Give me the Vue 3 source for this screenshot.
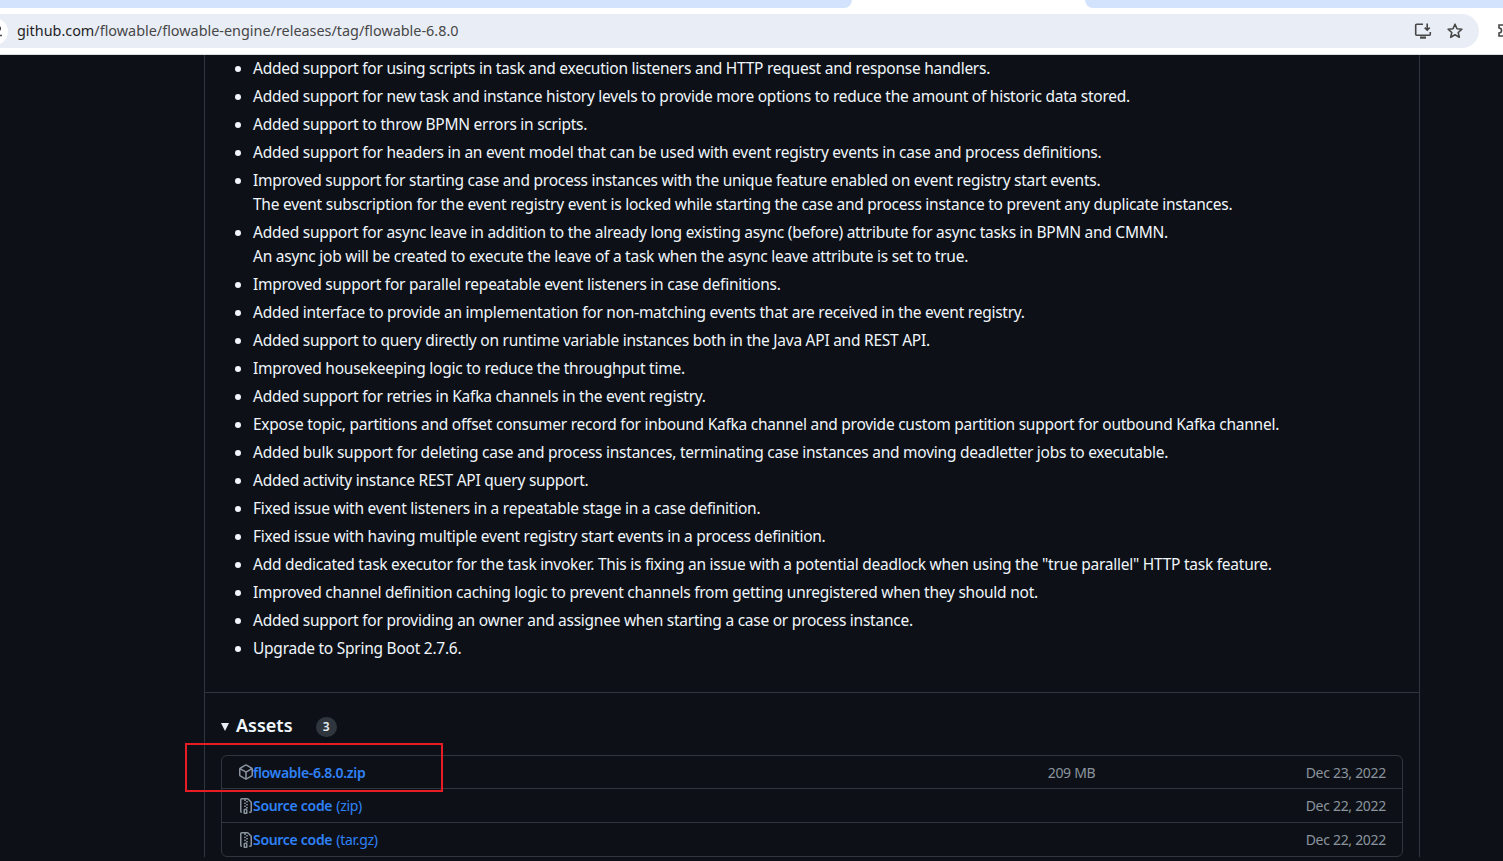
<script setup>
const notes = [
  ['Added support for using scripts in task and execution listeners and HTTP request and response handlers.'],
  ['Added support for new task and instance history levels to provide more options to reduce the amount of historic data stored.'],
  ['Added support to throw BPMN errors in scripts.'],
  ['Added support for headers in an event model that can be used with event registry events in case and process definitions.'],
  ['Improved support for starting case and process instances with the unique feature enabled on event registry start events.', 'The event subscription for the event registry event is locked while starting the case and process instance to prevent any duplicate instances.'],
  ['Added support for async leave in addition to the already long existing async (before) attribute for async tasks in BPMN and CMMN.', 'An async job will be created to execute the leave of a task when the async leave attribute is set to true.'],
  ['Improved support for parallel repeatable event listeners in case definitions.'],
  ['Added interface to provide an implementation for non-matching events that are received in the event registry.'],
  ['Added support to query directly on runtime variable instances both in the Java API and REST API.'],
  ['Improved housekeeping logic to reduce the throughput time.'],
  ['Added support for retries in Kafka channels in the event registry.'],
  ['Expose topic, partitions and offset consumer record for inbound Kafka channel and provide custom partition support for outbound Kafka channel.'],
  ['Added bulk support for deleting case and process instances, terminating case instances and moving deadletter jobs to executable.'],
  ['Added activity instance REST API query support.'],
  ['Fixed issue with event listeners in a repeatable stage in a case definition.'],
  ['Fixed issue with having multiple event registry start events in a process definition.'],
  ['Add dedicated task executor for the task invoker. This is fixing an issue with a potential deadlock when using the "true parallel" HTTP task feature.'],
  ['Improved channel definition caching logic to prevent channels from getting unregistered when they should not.'],
  ['Added support for providing an owner and assignee when starting a case or process instance.'],
  ['Upgrade to Spring Boot 2.7.6.'],
]
const assets = [
  { icon: 'box', name: 'flowable-6.8.0.zip', size: '209 MB', date: 'Dec 23, 2022' },
  { icon: 'zip', name: 'Source code', ext: '(zip)', size: '', date: 'Dec 22, 2022' },
  { icon: 'zip', name: 'Source code', ext: '(tar.gz)', size: '', date: 'Dec 22, 2022' },
]
</script>

<template>
  <div class="screen">
    <header class="chrome">
      <div class="tabs">
        <div class="tab-bg left"></div>
        <div class="tab-active"></div>
        <div class="tab-bg right"></div>
      </div>
      <div class="toolbar">
        <div class="site-chip">
          <svg width="16" height="16" viewBox="0 0 16 16" fill="none" stroke="#474747" stroke-width="1.6">
            <path d="M1 4.5h9M9 11.5h6" />
            <circle cx="11.5" cy="4.5" r="1.8" />
            <circle cx="6.5" cy="11.5" r="1.8" />
          </svg>
        </div>
        <div class="omnibox">
          <span class="url"><span class="host">github.com</span>/flowable/flowable-engine/releases/tag/flowable-6.8.0</span>
          <svg class="tool-icon install" width="18" height="18" viewBox="0 0 18 18" fill="none" stroke="#474747" stroke-width="1.6">
            <path d="M9 2.2H2.6a.9.9 0 0 0-.9.9v9.2a.9.9 0 0 0 .9.9h12.8a.9.9 0 0 0 .9-.9V10" />
            <path d="M13.2 1.5v6.4M10.7 5.6l2.5 2.5 2.5-2.5" />
            <path d="M6 15.6h6" stroke-width="2.2" />
          </svg>
          <svg class="tool-icon" width="18" height="18" viewBox="0 0 18 18" fill="none" stroke="#474747" stroke-width="1.6" stroke-linejoin="round">
            <path d="M9 2.2l2 4.5 4.9.5-3.7 3.3 1.1 4.8L9 12.8l-4.3 2.5 1.1-4.8-3.7-3.3 4.9-.5z" />
          </svg>
        </div>
        <svg class="ext" width="18" height="18" viewBox="0 0 18 18" fill="none" stroke="#474747" stroke-width="1.6">
          <path d="M2 3h10v11H2v-3a2 2 0 0 0 0-5z" />
        </svg>
      </div>
    </header>

    <main class="page">
      <section class="release">
        <ul class="notes">
          <li v-for="(note, i) in notes" :key="i">
            <template v-for="(line, j) in note" :key="j"><br v-if="j" />{{ line }}</template>
          </li>
        </ul>
        <div class="assets">
          <div class="assets-head">
            <span class="caret"></span>
            <h2>Assets</h2>
            <span class="counter">3</span>
          </div>
          <div class="asset-box">
            <div v-for="(a, i) in assets" :key="i" class="asset-row">
              <div class="asset-name">
                <svg v-if="a.icon === 'box'" width="16" height="16" viewBox="0 0 16 16" fill="#8b949e">
                  <path d="m8.878.392 5.25 3.045c.54.314.872.89.872 1.514v6.098a1.75 1.75 0 0 1-.872 1.514l-5.25 3.045a1.75 1.75 0 0 1-1.756 0l-5.25-3.045A1.75 1.75 0 0 1 1 11.049V4.951c0-.624.332-1.201.872-1.514L7.122.392a1.75 1.75 0 0 1 1.756 0ZM7.875 1.69l-4.63 2.685L8 7.133l4.755-2.758-4.63-2.685a.248.248 0 0 0-.25 0ZM2.5 5.677v5.372c0 .09.047.171.125.216l4.625 2.683V8.432Zm6.25 8.271 4.625-2.683a.25.25 0 0 0 .125-.216V5.677L8.75 8.432Z" />
                </svg>
                <svg v-else width="16" height="16" viewBox="0 0 16 16" fill="#8b949e">
                  <path d="M3.5 1.75v11.5c0 .09.048.173.126.217a.75.75 0 0 1-.752 1.298A1.748 1.748 0 0 1 2 13.25V1.75C2 .784 2.784 0 3.75 0h5.586c.464 0 .909.185 1.237.513l2.914 2.914c.329.328.513.773.513 1.237v8.586A1.75 1.75 0 0 1 12.25 15h-.5a.75.75 0 0 1 0-1.5h.5a.25.25 0 0 0 .25-.25V4.664a.25.25 0 0 0-.073-.177L9.513 1.573a.25.25 0 0 0-.177-.073H7.25a.75.75 0 0 1 0 1.5h-.5a.75.75 0 0 1 0-1.5h-3a.25.25 0 0 0-.25.25Zm3.75 8.75h.5c.966 0 1.75.784 1.75 1.75v3a.75.75 0 0 1-.75.75h-2.5a.75.75 0 0 1-.75-.75v-3c0-.966.784-1.75 1.75-1.75ZM6 5.25a.75.75 0 0 1 .75-.75h.5a.75.75 0 0 1 0 1.5h-.5A.75.75 0 0 1 6 5.25Zm.75 2.25h.5a.75.75 0 0 1 0 1.5h-.5a.75.75 0 0 1 0-1.5ZM8 6.75A.75.75 0 0 1 8.75 6h.5a.75.75 0 0 1 0 1.5h-.5A.75.75 0 0 1 8 6.75ZM8.75 3h.5a.75.75 0 0 1 0 1.5h-.5a.75.75 0 0 1 0-1.5ZM8 9.75A.75.75 0 0 1 8.75 9h.5a.75.75 0 0 1 0 1.5h-.5A.75.75 0 0 1 8 9.75Zm-1 2.5v2.25h1v-2.25a.25.25 0 0 0-.25-.25h-.5a.25.25 0 0 0-.25.25Z" />
                </svg>
                <span class="link"><b>{{ a.name }}</b><span v-if="a.ext" class="ext-label">{{ a.ext }}</span></span>
              </div>
              <div class="asset-size">{{ a.size }}</div>
              <div class="asset-date">{{ a.date }}</div>
            </div>
          </div>
        </div>
      </section>
    </main>

    <div class="annotation"></div>
  </div>
</template>

<style>
html, body { margin: 0; height: 100%; overflow: hidden; background: #0d1117; }
</style>

<style scoped>
.screen {
  position: relative;
  height: 861px;
  overflow: hidden;
  background: #0d1117;
  font-family: "Noto Sans", "Open Sans", sans-serif;
}
.chrome {
  background: #fff;
  border-bottom: 1px solid #dadce0;
  height: 54px;
}
.tabs { display: flex; height: 8px; background: #fff; }
.tab-bg { height: 8px; background: #d3e3fd; }
.tab-bg.left { width: 852px; border-bottom-right-radius: 8px; }
.tab-active { width: 233px; background: #fff; }
.tab-bg.right { flex: 1; border-bottom-left-radius: 8px; }
.toolbar { position: relative; display: flex; align-items: center; height: 34px; margin-top: 6px; }
.site-chip {
  position: absolute;
  left: -19px;
  top: 4px;
  width: 27px;
  height: 27px;
  border-radius: 50%;
  background: #fff;
  display: flex;
  align-items: center;
  justify-content: center;
  z-index: 1;
}
.omnibox {
  width: 1479px;
  flex: none;
  height: 34px;
  box-sizing: border-box;
  display: flex;
  align-items: center;
  background: #e9edf6;
  border-radius: 0 17px 17px 0;
  padding-left: 17px;
  padding-right: 15px;
}
.url {
  flex: 1;
  font-size: 14.4px;
  line-height: 34px;
  color: #474747;
}
.host { color: #1f1f1f; }
.tool-icon { margin-left: 14px; flex: none; }
.ext { margin-left: 18px; flex: none; }
.page { margin-left: 204px; width: 1216px; }
.release {
  box-sizing: border-box;
  width: 1216px;
  border-left: 1px solid #30363d;
  border-right: 1px solid #30363d;
  color: #e6edf3;
}
.notes {
  margin: 0;
  padding: 1px 16px 32px 48px;
  font-size: 15.5px;
  line-height: 24px;
  letter-spacing: -0.25px;
  color: #f0f6fc;
}
.notes li { margin-bottom: 4px; }
.notes li:last-child { margin-bottom: 0; }
.assets { border-top: 1px solid #30363d; padding: 19px 16px 0; }
.assets-head { display: flex; align-items: center; height: 26px; margin-bottom: 17px; }
.caret {
  width: 0;
  height: 0;
  border-left: 4.5px solid transparent;
  border-right: 4.5px solid transparent;
  border-top: 8px solid #e6edf3;
  margin-right: 6px;
  margin-top: 3px;
}
h2 {
  margin: 0 0 0 1px;
  font-size: 18px;
  font-weight: 600;
  color: #f0f6fc;
}
.counter {
  width: 21px;
  height: 20px;
  margin-left: 23px;
  margin-top: 4px;
  border-radius: 10px;
  background: #30363d;
  color: #e6edf3;
  font-size: 12px;
  font-weight: 600;
  text-align: center;
  line-height: 20px;
}
.asset-box {
  border: 1px solid #30363d;
  border-radius: 6px;
}
.asset-row {
  display: flex;
  align-items: center;
  height: 33px;
  padding: 0 16px;
  border-top: 1px solid #30363d;
  font-size: 14px;
  letter-spacing: -0.3px;
}
.asset-row:first-child { border-top: none; height: 32px; }
.asset-name { display: flex; align-items: center; flex: 1; color: #2f81f7; }
.asset-name svg { flex: none; margin-right: -1px; }
.link { color: #2f81f7; }
.link b { font-weight: 600; }
.ext-label { margin-left: 4px; }
.asset-size { width: 47px; color: #8b949e; margin-right: 211px; white-space: nowrap; }
.asset-date { color: #8b949e; white-space: nowrap; }
.annotation {
  position: absolute;
  left: 185px;
  top: 743px;
  width: 254px;
  height: 45px;
  border: 2px solid #e81c24;
}
</style>
